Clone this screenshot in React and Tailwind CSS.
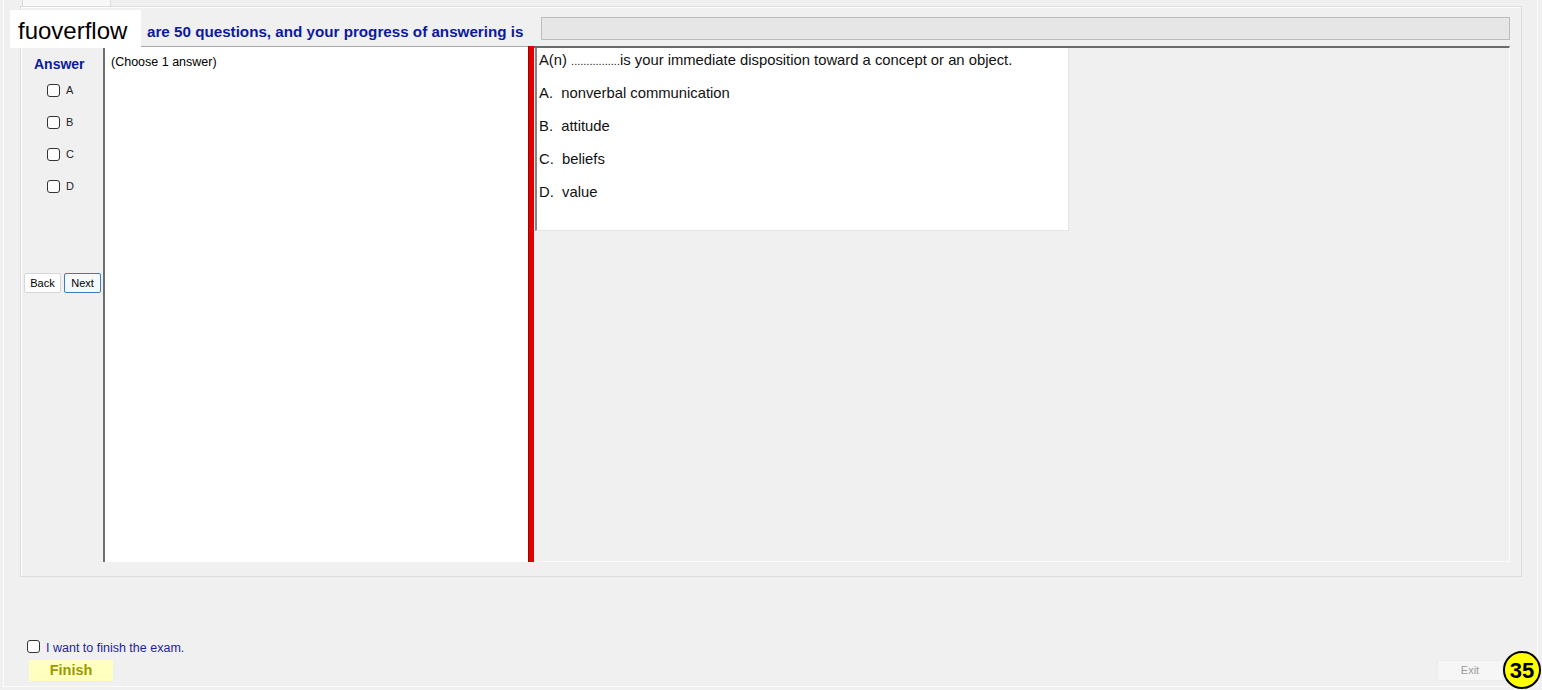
import React from "react";

const options = [
  { key: "A", text: "nonverbal communication" },
  { key: "B", text: "attitude" },
  { key: "C", text: "beliefs" },
  { key: "D", text: "value" },
];

const Box = () => (
  <span className="inline-block shrink-0 w-[13px] h-[13px] rounded-[3px] border border-[#333] bg-white" />
);

export default function App() {
  return (
    <div className="relative w-[1542px] h-[690px] overflow-hidden bg-[#f0f0f0] font-['Liberation_Sans',Arial,sans-serif] text-black">
      <div className="ml-[3px] w-[1535px] h-[687px] border-x border-b border-[#fbfbfb] flex flex-col">
        {/* tab header */}
        <div className="ml-[18px] w-[89px] h-[6px] bg-[#f8f8f8] border-x border-[#dadada]" />

        {/* tab panel */}
        <div className="ml-[16px] w-[1502px] h-[571px] border border-[#dcdcdc] shadow-[inset_1px_1px_0_#ffffff] flex flex-col">
          <div className="mt-[10px] flex h-[23px] pl-[126px] pr-[11px]">
            <span className="w-[378px] pt-[6px] whitespace-nowrap text-[15.2px] leading-[18px] font-bold text-[#0c1a9c]">
              are 50 questions, and your progress of answering is
            </span>
            <div className="ml-[16px] flex-1 h-[23px] bg-[#e6e6e6] border border-[#bcbcbc]" />
          </div>

          <div className="mt-[6px] ml-[1px] w-[1488px] h-[516px] flex">
            {/* answer column */}
            <div className="w-[81px] flex flex-col">
              <div className="pt-[10px] pl-[12px] text-[14px] leading-[17px] font-bold text-[#0c1a9c]">
                Answer
              </div>
              <div className="mt-[1px] flex flex-col">
                {options.map((o) => (
                  <div key={o.key} className="h-[32px] flex items-center pl-[25px] gap-[6px]">
                    <Box />
                    <span className="text-[11px] text-[#222]">{o.key}</span>
                  </div>
                ))}
              </div>
              <div className="mt-[71px] pl-[2px] flex gap-[3px]">
                <button className="w-[37px] h-[20px] text-[11px] bg-[#fdfdfd] border border-[#d6d6d6] rounded-[2px]">
                  Back
                </button>
                <button className="w-[37px] h-[20px] text-[11px] bg-[#f4f9fd] border border-[#3a7cc4] rounded-[2px]">
                  Next
                </button>
              </div>
            </div>

            {/* answer textbox */}
            <div className="w-[425px] bg-white border-l-2 border-l-[#6e6e6e] border-t border-t-[#a8a8a8] pt-[8px] pl-[6px] text-[12.5px] leading-[14px]">
              (Choose 1 answer)
            </div>

            {/* splitter */}
            <div className="w-[6px] bg-[#e00000] border-l border-l-[#a00000]" />

            {/* question panel */}
            <div className="flex-1 border-t-2 border-t-[#6b6b6b] border-r border-r-[#fafafa] border-b border-b-[#fafafa] pl-[1px]">
              <div className="w-[534px] h-[183px] bg-white border-l-2 border-l-[#858585] border-r border-r-[#e4e4e4] border-b border-b-[#e4e4e4] pt-[4px] pl-[2px] text-[14.8px] leading-[17px] text-[#111]">
                <div className="h-[17px]">
                  A(n) <span className="text-[11px] leading-none">................</span>is your immediate disposition toward a concept or an object.
                </div>
                {options.map((o) => (
                  <div key={o.key} className="mt-[16px] h-[17px]">
                    {o.key}.&nbsp; {o.text}
                  </div>
                ))}
              </div>
            </div>
          </div>
        </div>

        {/* bottom area */}
        <div className="flex-1 flex items-end justify-between pl-[23px] pr-[34px] pb-[5px]">
          <div className="flex flex-col">
            <label className="flex items-center gap-[6px]">
              <Box />
              <span className="pt-[3px] text-[12.5px] leading-[14px] text-[#1f1f9e]">I want to finish the exam.</span>
            </label>
            <button className="mt-[5px] ml-[2px] w-[84px] h-[21px] bg-[#ffffbf] text-[14.5px] font-bold text-[#9a9a00]">
              Finish
            </button>
          </div>
          <button className="w-[66px] h-[21px] bg-[#f6f6f6] border border-[#ececec] text-[11px] text-[#9c9c9c]">
            Exit
          </button>
        </div>
      </div>

      {/* watermark */}
      <div className="absolute left-[10px] top-[10px] w-[131px] h-[38px] bg-white flex items-center pl-[8px] pt-[4px] text-[24px] text-black">
        fuoverflow
      </div>

      {/* counter badge */}
      <div className="absolute left-[1503px] top-[651px] w-[38px] h-[38px] rounded-full bg-[#ffff00] border-2 border-black flex items-center justify-center text-[22px] font-bold text-black">
        35
      </div>
    </div>
  );
}
